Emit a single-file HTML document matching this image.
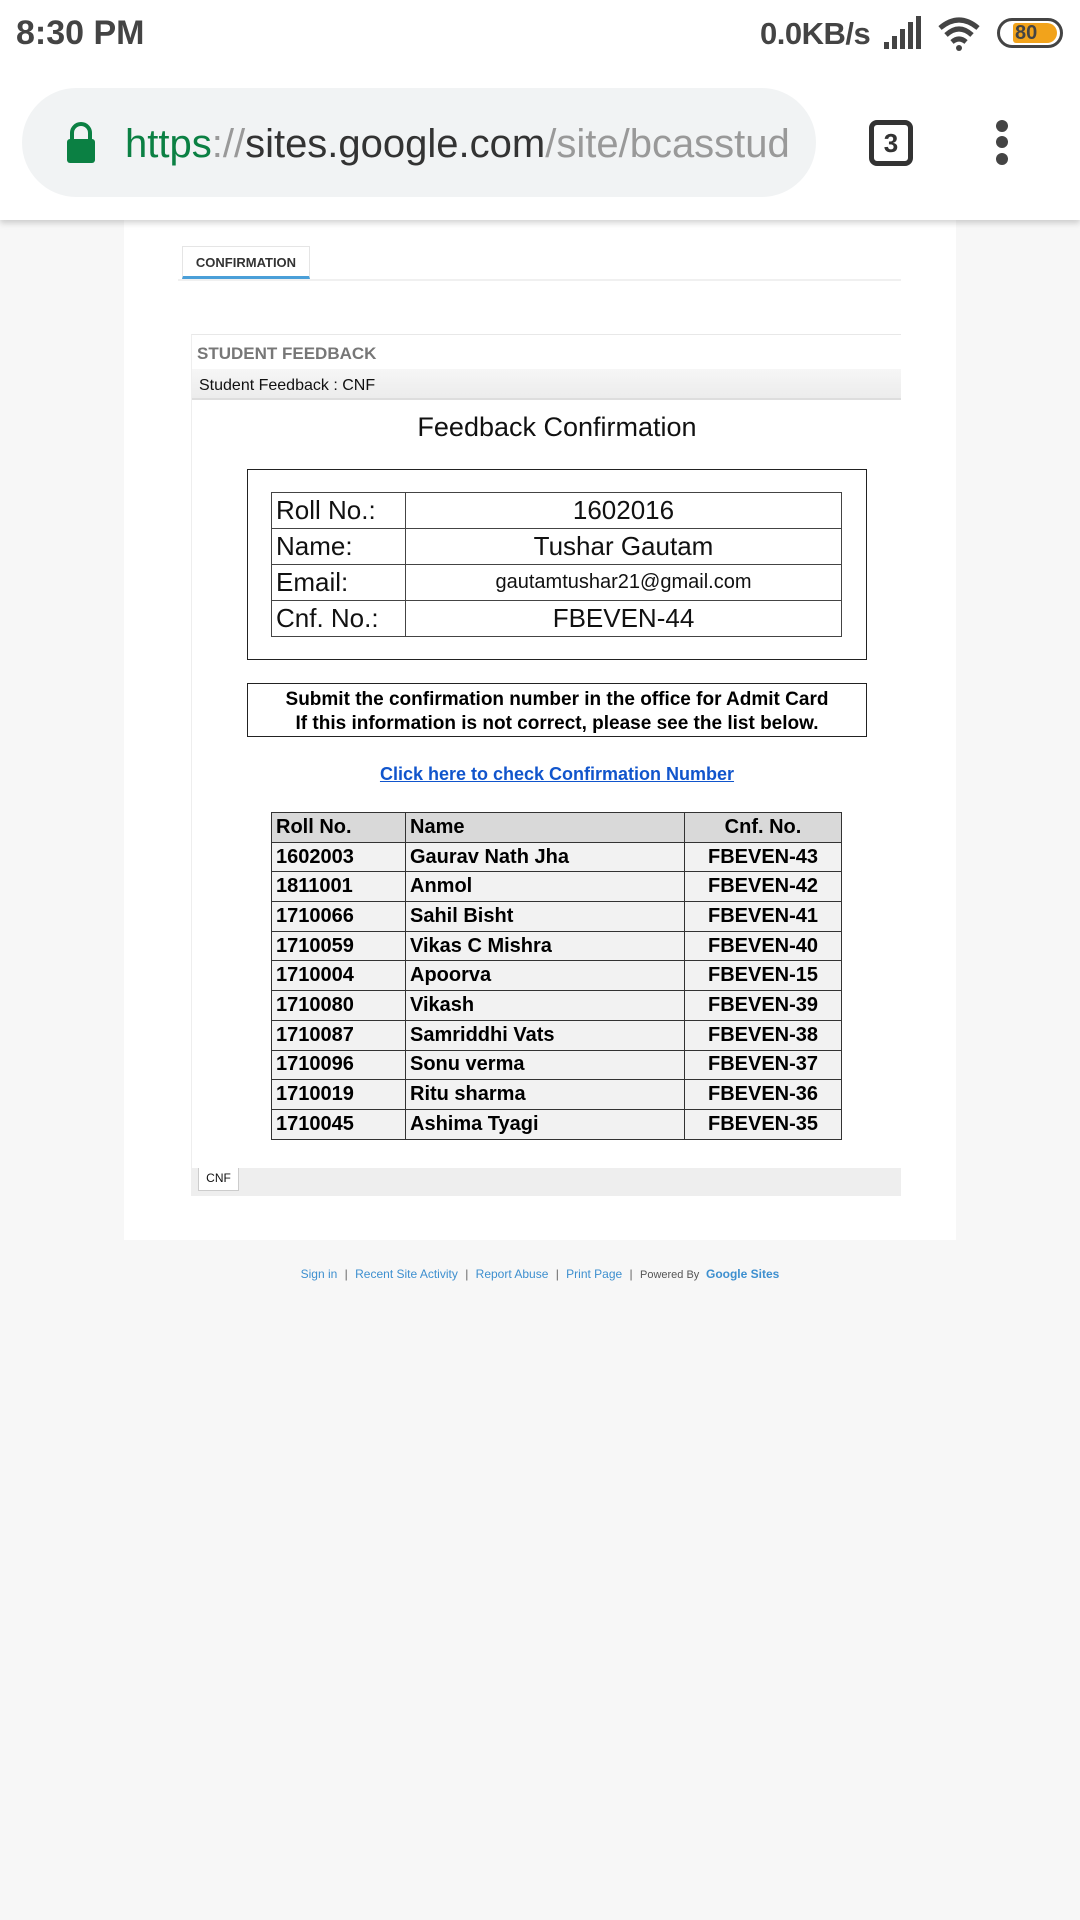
<!DOCTYPE html>
<html><head><meta charset="utf-8"><style>
*{margin:0;padding:0;box-sizing:border-box}
body{width:1080px;height:1920px;background:#f7f7f7;font-family:"Liberation Sans",sans-serif;position:relative;overflow:hidden}
.abs{position:absolute}
#top{left:0;top:0;width:1080px;height:220px;background:#fff;box-shadow:0 3px 6px rgba(0,0,0,.18);z-index:2}
#content{left:124px;top:220px;width:832px;height:1020px;background:#fff}
table{border-collapse:collapse}
.info td{border:1.5px solid #444;height:36px;font-size:26px;color:#111}
.list td{border:1.5px solid #333;height:29.7px;font-size:20px;font-weight:bold;color:#000;background:#f2f2f2;padding:0 4px}
.list tr.h td{background:#d9d9d9}
</style></head><body>
<div id="top" class="abs">
  <div class="abs" style="left:16px;top:14px;font-size:34px;font-weight:bold;color:#444">8:30 PM</div>
  <div class="abs" style="left:760px;top:16px;font-size:31px;font-weight:bold;color:#444;letter-spacing:-0.5px">0.0KB/s</div>
  <svg class="abs" style="left:882px;top:14px" width="42" height="36"><rect x="2" y="28" width="5" height="7" fill="#444"/><rect x="10" y="22" width="5" height="13" fill="#444"/><rect x="18" y="15" width="5" height="20" fill="#444"/><rect x="26" y="8" width="5" height="27" fill="#444"/><rect x="34" y="2" width="5" height="33" fill="#444"/></svg>
  <svg class="abs" style="left:936px;top:16px" width="46" height="36"><path d="M4 12 Q23 -4 42 12" stroke="#444" stroke-width="5" fill="none"/><path d="M10 19 Q23 7 36 19" stroke="#444" stroke-width="5" fill="none"/><path d="M16 26 Q23 20 30 26" stroke="#444" stroke-width="5" fill="none"/><circle cx="23" cy="32" r="3" fill="#444"/></svg>
  <div class="abs" style="left:997px;top:18px;width:66px;height:30px;border:3px solid #444;border-radius:15px"></div>
  <div class="abs" style="left:1013px;top:23px;width:44px;height:20px;background:#f2a31b;border-radius:3px 10px 10px 3px;font-size:20px;font-weight:bold;color:#444;line-height:20px;text-indent:2px">80</div>
  <div class="abs" style="left:22px;top:88px;width:794px;height:109px;background:#f1f3f4;border-radius:55px"></div>
  <svg class="abs" style="left:64px;top:122px" width="34" height="42"><path d="M8 18 V11 a9 9 0 0 1 18 0 V18" stroke="#0b8043" stroke-width="4" fill="none"/><rect x="3" y="17" width="28" height="24" rx="3" fill="#0b8043"/></svg>
  <div class="abs" style="left:125px;top:122px;font-size:40px;color:#333;white-space:nowrap"><span style="color:#0b8043">https</span><span style="color:#999">://</span>sites.google.com<span style="color:#999">/site/bcasstud</span></div>
  <div class="abs" style="left:869px;top:120px;width:44px;height:46px;border:5px solid #333;border-radius:8px;font-size:26px;font-weight:bold;color:#333;text-align:center;line-height:36px">3</div>
  <div class="abs" style="left:996px;top:120px;width:12px;height:12px;border-radius:6px;background:#444"></div>
  <div class="abs" style="left:996px;top:136px;width:12px;height:12px;border-radius:6px;background:#444"></div>
  <div class="abs" style="left:996px;top:153px;width:12px;height:12px;border-radius:6px;background:#444"></div>
</div>
<div id="content" class="abs"></div>
<div class="abs" style="left:182px;top:246px;width:128px;height:33px;border:1px solid #e5e5e5;border-bottom:3px solid #4a9fd8;font-size:13px;font-weight:bold;color:#333;text-align:center;line-height:32px">CONFIRMATION</div>
<div class="abs" style="left:178px;top:279px;width:723px;height:2px;background:#f0f0f0"></div>
<div class="abs" style="left:191px;top:334px;width:710px;height:862px;border-left:1px solid #eee;border-top:1px solid #e8e8e8"></div>
<div class="abs" style="left:197px;top:344px;font-size:17px;font-weight:bold;color:#777">STUDENT FEEDBACK</div>
<div class="abs" style="left:192px;top:369px;width:709px;height:31px;background:linear-gradient(#f6f6f6,#ececec);border-bottom:2px solid #ddd;font-size:16px;color:#111;padding:9px 7px;line-height:16px">Student Feedback : CNF</div>
<div class="abs" style="left:191px;top:412px;width:732px;text-align:center;font-size:27px;color:#111">Feedback Confirmation</div>
<div class="abs" style="left:247px;top:469px;width:620px;height:191px;border:1.5px solid #222"></div>
<table class="abs info" style="left:271px;top:492px;width:571px">
<tr><td style="width:134px;padding-left:4px">Roll No.:</td><td style="text-align:center">1602016</td></tr>
<tr><td style="padding-left:4px">Name:</td><td style="text-align:center">Tushar Gautam</td></tr>
<tr><td style="padding-left:4px">Email:</td><td style="text-align:center;font-size:20px">gautamtushar21@gmail.com</td></tr>
<tr><td style="padding-left:4px">Cnf. No.:</td><td style="text-align:center">FBEVEN-44</td></tr>
</table>
<div class="abs" style="left:247px;top:683px;width:620px;height:54px;border:1.5px solid #222;text-align:center;font-size:19px;font-weight:bold;line-height:24px;padding-top:4px;color:#000">Submit the confirmation number in the office for Admit Card<br>If this information is not correct, please see the list below.</div>
<div class="abs" style="left:191px;top:764px;width:732px;text-align:center;font-size:18px;font-weight:bold;color:#1155cc;text-decoration:underline">Click here to check Confirmation Number</div>
<table class="abs list" style="left:271px;top:812px;width:571px">
<tr class="h"><td style="width:134px">Roll No.</td><td style="width:279px">Name</td><td style="text-align:center">Cnf. No.</td></tr>
<tr><td>1602003</td><td>Gaurav Nath Jha</td><td style="text-align:center">FBEVEN-43</td></tr>
<tr><td>1811001</td><td>Anmol</td><td style="text-align:center">FBEVEN-42</td></tr>
<tr><td>1710066</td><td>Sahil Bisht</td><td style="text-align:center">FBEVEN-41</td></tr>
<tr><td>1710059</td><td>Vikas C Mishra</td><td style="text-align:center">FBEVEN-40</td></tr>
<tr><td>1710004</td><td>Apoorva</td><td style="text-align:center">FBEVEN-15</td></tr>
<tr><td>1710080</td><td>Vikash</td><td style="text-align:center">FBEVEN-39</td></tr>
<tr><td>1710087</td><td>Samriddhi Vats</td><td style="text-align:center">FBEVEN-38</td></tr>
<tr><td>1710096</td><td>Sonu verma</td><td style="text-align:center">FBEVEN-37</td></tr>
<tr><td>1710019</td><td>Ritu sharma</td><td style="text-align:center">FBEVEN-36</td></tr>
<tr><td>1710045</td><td>Ashima Tyagi</td><td style="text-align:center">FBEVEN-35</td></tr>
</table>
<div class="abs" style="left:191px;top:1168px;width:710px;height:28px;background:#eee"></div>
<div class="abs" style="left:198px;top:1168px;width:41px;height:23px;background:#fff;border:1px solid #ccc;border-top:none;font-size:12px;text-align:center;line-height:20px;color:#111">CNF</div>
<div class="abs" style="left:0;top:1267px;width:1080px;text-align:center;font-size:12px;color:#3d8fcf;white-space:nowrap">Sign in <span style="color:#666;margin:0 4px">|</span> Recent Site Activity <span style="color:#666;margin:0 4px">|</span> Report Abuse <span style="color:#666;margin:0 4px">|</span> Print Page <span style="color:#666;margin:0 4px">|</span> <span style="color:#555;font-size:11px">Powered By</span> &nbsp;<b>Google Sites</b></div>
</body></html>
